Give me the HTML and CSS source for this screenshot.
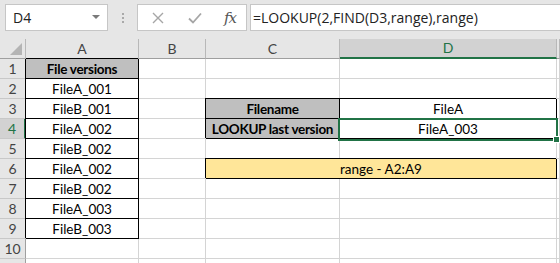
FILE: index.html
```html
<!DOCTYPE html>
<html lang="en">
<head>
  <meta charset="UTF-8" />
  <title>LOOKUP last version</title>
  <link rel="stylesheet" href="styles.css">
</head>
<body>
<div class="bar">
  <div class="namebox">D4<span class="arrow"></span></div>
  <div class="sep"><i></i><i></i><i></i></div>
  <div class="fxbox">
    <svg width="12" height="12" viewBox="0 0 12 12"><path d="M1 1 L11 11 M11 1 L1 11" stroke="#a6a6a6" stroke-width="1.4" fill="none"/></svg>
    <svg width="14" height="12" viewBox="0 0 14 12"><path d="M1 6.5 L5 10.5 L13 1.5" stroke="#a6a6a6" stroke-width="1.8" fill="none"/></svg>
    <span class="fx">fx</span>
  </div>
  <div class="formula">=LOOKUP(2,FIND(D3,range),range)</div>
</div>

<div class="sheet">
  <div class="c hd corner"><span class="tri"></span></div>
  <div class="c hd">A</div>
  <div class="c hd">B</div>
  <div class="c hd">C</div>
  <div class="c hd sel">D</div>
  <div class="c hd"></div>

  <div class="c rh">1</div>
  <div class="c bx gray b">File versions</div>
  <div class="c"></div>
  <div class="c"></div>
  <div class="c"></div>
  <div class="c"></div>

  <div class="c rh">2</div>
  <div class="c bx">FileA_001</div>
  <div class="c"></div>
  <div class="c"></div>
  <div class="c"></div>
  <div class="c"></div>

  <div class="c rh">3</div>
  <div class="c bx">FileB_001</div>
  <div class="c"></div>
  <div class="c bx gray b">Filename</div>
  <div class="c bx">FileA</div>
  <div class="c"></div>

  <div class="c rh sel">4</div>
  <div class="c bx">FileA_002</div>
  <div class="c"></div>
  <div class="c bx gray b">LOOKUP last version</div>
  <div class="c bx active">FileA_003<span class="handle"></span></div>
  <div class="c"></div>

  <div class="c rh">5</div>
  <div class="c bx">FileB_002</div>
  <div class="c"></div>
  <div class="c"></div>
  <div class="c"></div>
  <div class="c"></div>

  <div class="c rh">6</div>
  <div class="c bx">FileA_002</div>
  <div class="c"></div>
  <div class="c bx yellow wide">range - A2:A9</div>
  <div class="c"></div>

  <div class="c rh">7</div>
  <div class="c bx">FileB_002</div>
  <div class="c"></div>
  <div class="c"></div>
  <div class="c"></div>
  <div class="c"></div>

  <div class="c rh">8</div>
  <div class="c bx">FileA_003</div>
  <div class="c"></div>
  <div class="c"></div>
  <div class="c"></div>
  <div class="c"></div>

  <div class="c rh">9</div>
  <div class="c bx">FileB_003</div>
  <div class="c"></div>
  <div class="c"></div>
  <div class="c"></div>
  <div class="c"></div>

  <div class="c rh">10</div>
  <div class="c"></div>
  <div class="c"></div>
  <div class="c"></div>
  <div class="c"></div>
  <div class="c"></div>

  <!-- row 11 is cut by the window edge, number not visible -->
  <div class="c rh"></div>
  <div class="c"></div>
  <div class="c"></div>
  <div class="c"></div>
  <div class="c"></div>
  <div class="c"></div>
</div>
</body>
</html>
```

FILE: styles.css
```css
/* Reset */
* { margin: 0; padding: 0; box-sizing: border-box; }
html, body { width: 100%; height: 100%; overflow: hidden; background: #fff; }
body { font-family: Lato, 'Noto Sans', sans-serif; color: #000; }

/* Formula bar */
.bar {
  height: 39px; background: #e6e6e6;
  display: flex; align-items: flex-start; padding: 4px 0 0 5px;
}
.namebox {
  position: relative; width: 103px; height: 27px;
  background: #fff; border: 1px solid #c6c6c6;
  font: 14px 'Open Sans', sans-serif; color: #222;
  padding: 3px 0 0 7px;
}
.arrow {
  position: absolute; right: 7px; top: 10px;
  border-left: 4px solid transparent; border-right: 4px solid transparent;
  border-top: 4px solid #7a7a7a;
}
.sep {
  width: 29px; height: 27px;
  display: flex; flex-direction: column; align-items: center; justify-content: center; gap: 2px;
}
.sep i { display: block; width: 2px; height: 2px; background: #a9a9a9; }
.fxbox {
  width: 110px; height: 27px; background: #fff; border: 1px solid #c6c6c6;
  display: flex; align-items: center; padding-left: 14px;
}
.fxbox svg:nth-child(2) { margin-left: 24px; }
.fx {
  margin-left: 22px; font: italic 15px 'DejaVu Serif', serif; color: #555;
  letter-spacing: -1px;
}
.formula {
  flex: 1; height: 27px; margin-left: 3px;
  background: #fff; border: 1px solid #c6c6c6; border-right: 0;
  font: 14px 'Open Sans', sans-serif; color: #222;
  padding: 3px 0 0 2px; white-space: nowrap;
}

/* Sheet grid */
.sheet {
  display: grid;
  grid-template-columns: 26px 113px 67px 134px 217px 1fr;
  grid-auto-rows: 20px;
}
.c {
  border-right: 1px solid #d4d4d4; border-bottom: 1px solid #d4d4d4;
  display: flex; align-items: flex-end; justify-content: center;
  font-size: 13.5px; line-height: 17px; white-space: nowrap;
}
.hd {
  background: #e6e6e6; border-right-color: #b8b8b8; border-bottom-color: #9f9f9f;
  color: #444; align-items: center; line-height: 1; font-size: 14px;
}
.rh {
  background: #e6e6e6; border-right-color: #9f9f9f; border-bottom-color: #c8c8c8;
  color: #444; align-items: center; line-height: 1; font-size: 14px;
}
.hd.sel { background: #d2d2d2; color: #217346; border-bottom: 2px solid #217346; }
.rh.sel { background: #d2d2d2; color: #217346; border-right: 2px solid #217346; }
.corner { position: relative; }
.tri {
  position: absolute; right: 3px; bottom: 3px;
  border-left: 12px solid transparent; border-bottom: 12px solid #b4b4b4;
}

/* Formatted cells */
.bx { border-right-color: #000; border-bottom-color: #000; box-shadow: -1px -1px 0 #000; }
.gray { background: #bfbfbf; }
.yellow { background: #ffe699; }
.b { font-weight: 700; letter-spacing: -0.3px; }
.wide { grid-column: span 2; }

/* Active cell */
.active { position: relative; }
.active::after {
  content: ""; position: absolute; left: -2px; right: -2px; top: -1px; bottom: -3px;
  border: 2px solid #217346;
}
.handle {
  position: absolute; right: -4px; bottom: -5px; width: 7px; height: 7px;
  background: #217346; border: 1px solid #fff; z-index: 1;
}
```
